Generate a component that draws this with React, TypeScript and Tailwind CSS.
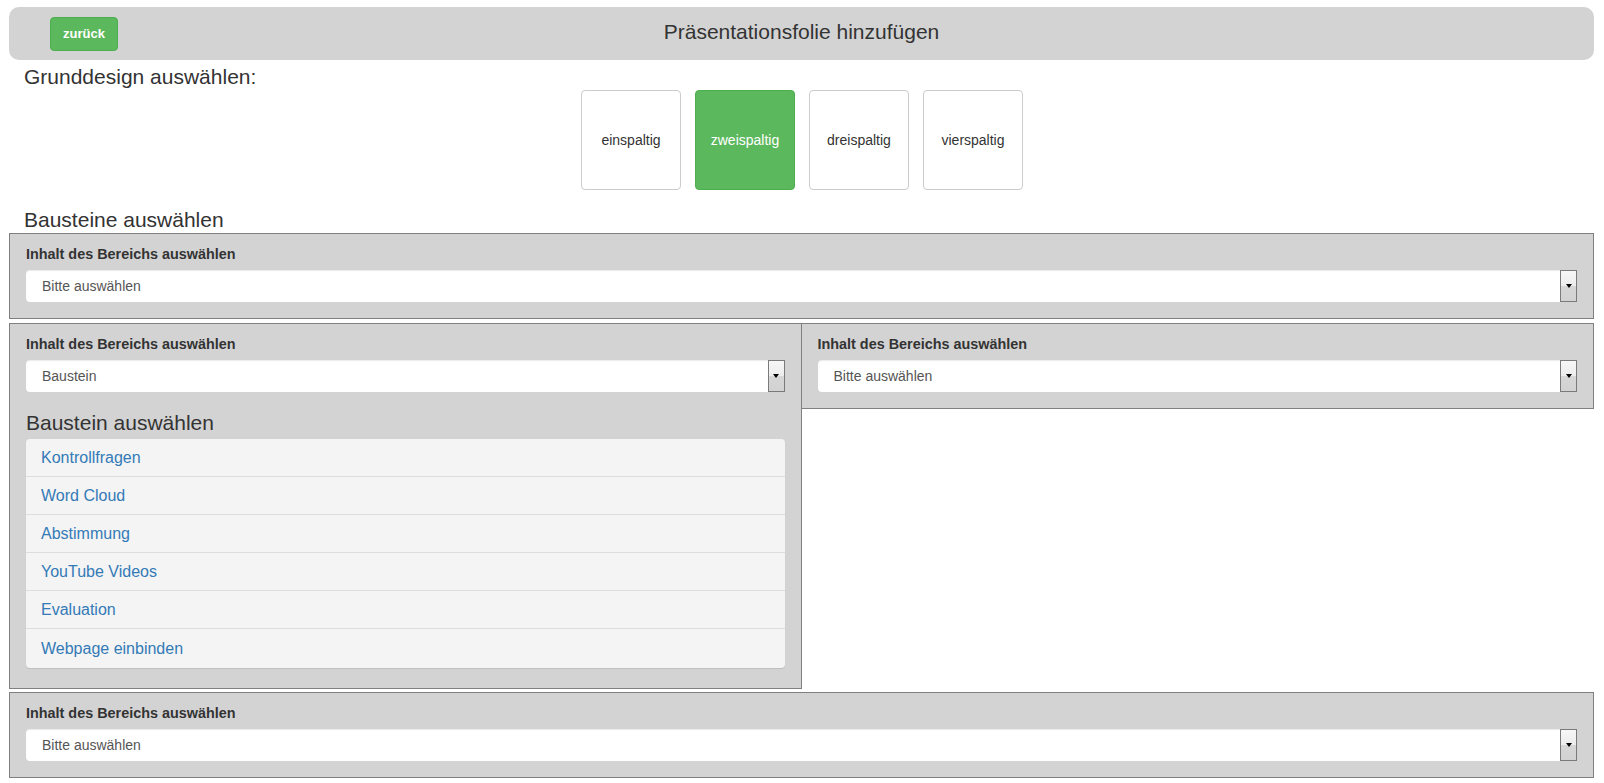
import React from 'react';

const designs = ['einspaltig', 'zweispaltig', 'dreispaltig', 'vierspaltig'];

const bausteine = [
    'Kontrollfragen',
    'Word Cloud',
    'Abstimmung',
    'YouTube Videos',
    'Evaluation',
    'Webpage einbinden'
];

function SelectBox({ value }: { value: string }) {
    return (
        <div className="relative h-[32px] rounded-[4px] bg-white shadow-[inset_0_1px_1px_rgba(0,0,0,0.08)]">
            <div className="pl-[16px] text-[14px] leading-[32px] text-[#555]">{value}</div>
            {/* native-looking dropdown button */}
            <div className="absolute right-0 top-0 flex h-[32px] w-[17px] items-center justify-center border border-[#7a7a7a] bg-[linear-gradient(to_bottom,#f7f7f7_0%,#ececec_50%,#d6d6d6_51%,#d2d2d2_100%)]">
                <div className="h-0 w-0 border-x-[3.5px] border-t-[4px] border-x-transparent border-t-black" />
            </div>
        </div>
    );
}

function AreaPanel({ value, children }: { value: string; children?: React.ReactNode }) {
    return (
        <>
            <div className="mb-[6px] text-[14.4px] font-bold leading-[20px] text-[#333]">
                Inhalt des Bereichs auswählen
            </div>
            <SelectBox value={value} />
            {children}
        </>
    );
}

export default function App() {
    return (
        <div className="min-h-screen bg-white pl-[9px] pr-[10px] pt-[7px] font-['Liberation_Sans',Arial,sans-serif] text-[#333]">
            {/* Header */}
            <div className="relative h-[53px] rounded-[10px] bg-[#d3d3d3] pt-[13px] text-center">
                <button className="absolute left-[41px] top-[10px] h-[34px] w-[68px] rounded-[4px] border border-[#4cae4c] bg-[#5cb85c] text-[13px] font-bold text-white">
                    zurück
                </button>
                <h1 className="text-[21px] leading-[24px] text-[#333]">Präsentationsfolie hinzufügen</h1>
            </div>

            {/* Grunddesign */}
            <h2 className="mt-[5px] pl-[15px] text-[21px] leading-[24px]">Grunddesign auswählen:</h2>
            <div className="mt-[1px] flex justify-center gap-[14px] pl-[1px]">
                {designs.map((d) => (
                    <div
                        key={d}
                        className={
                            d === 'zweispaltig'
                                ? 'flex h-[100px] w-[100px] items-center justify-center rounded-[4px] border border-[#4cae4c] bg-[#5cb85c] text-[14px] text-white'
                                : 'flex h-[100px] w-[100px] items-center justify-center rounded-[4px] border border-[#ccc] bg-white text-[14px] text-[#333]'
                        }
                    >
                        {d}
                    </div>
                ))}
            </div>

            {/* Bausteine */}
            <h2 className="mt-[18px] pl-[15px] text-[21px] leading-[24px]">Bausteine auswählen</h2>

            <div className="mt-[1px] h-[86px] border border-[#808080] bg-[#d3d3d3] px-[16px] pt-[10px]">
                <AreaPanel value="Bitte auswählen" />
            </div>

            <div className="mt-[4px] grid grid-cols-2 items-start">
                <div className="border border-[#808080] bg-[#d3d3d3] px-[16px] pb-[20px] pt-[10px]">
                    <AreaPanel value="Baustein">
                        <h3 className="mt-[19px] text-[21px] leading-[24px]">Baustein auswählen</h3>
                        <ul className="mt-[4px] rounded-[4px] bg-[#f4f4f4] shadow-[0_1px_1px_rgba(0,0,0,0.1)]">
                            {bausteine.map((b, i) => (
                                <li
                                    key={b}
                                    className={
                                        i < bausteine.length - 1
                                            ? 'border-b border-[#dddddd] pl-[15px] py-[8px] text-[16px] leading-[21px] text-[#337ab7]'
                                            : 'pl-[15px] py-[8px] text-[16px] leading-[23px] text-[#337ab7]'
                                    }
                                >
                                    {b}
                                </li>
                            ))}
                        </ul>
                    </AreaPanel>
                </div>
                <div className="h-[86px] border border-l-0 border-[#808080] bg-[#d3d3d3] px-[16px] pt-[10px]">
                    <AreaPanel value="Bitte auswählen" />
                </div>
            </div>

            <div className="mt-[3px] h-[86px] border border-[#808080] bg-[#d3d3d3] px-[16px] pt-[10px]">
                <AreaPanel value="Bitte auswählen" />
            </div>
        </div>
    );
}
